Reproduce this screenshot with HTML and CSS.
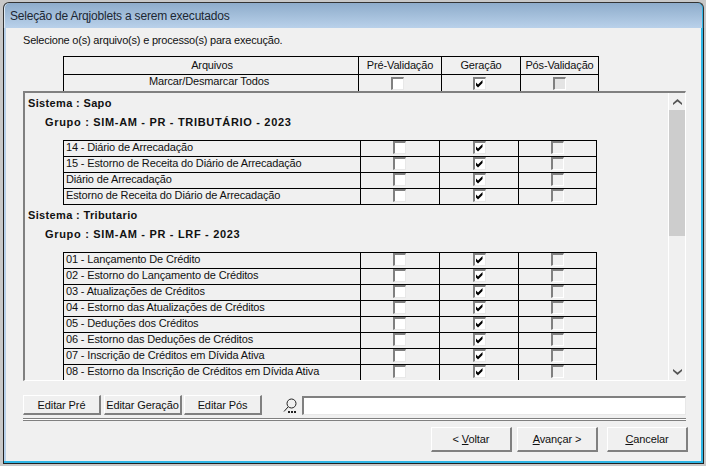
FILE: index.html
```html
<!DOCTYPE html>
<html lang="pt-BR">
<head>
  <meta charset="UTF-8">
  <title>Seleção de Arqjoblets a serem executados</title>
  <link rel="stylesheet" href="styles.css">
</head>
<body>
  <div class="window">
    <div class="titlebar">Seleção de Arqjoblets a serem executados</div>
    <div class="client">
      <p class="hint">Selecione o(s) arquivo(s) e processo(s) para execução.</p>

      <div class="head-table">
        <div class="row head-row">
          <div class="cell name center">Arquivos</div>
          <div class="cell pre">Pré-Validação</div>
          <div class="cell gen">Geração</div>
          <div class="cell pos">Pós-Validação</div>
        </div>
        <div class="row head-row">
          <div class="cell name center">Marcar/Desmarcar Todos</div>
          <div class="cell pre"><span class="check"></span></div>
          <div class="cell gen"><span class="check on"><svg viewBox="0 0 9 9"><path d="M1 3.500l2 2 4.500-4.500v3l-4.500 4.500-2-2z"/></svg></span></div>
          <div class="cell pos"><span class="check off"></span></div>
        </div>
      </div>

      <div class="panel">
        <div class="panel-body" id="panel-body"></div>
        <div class="scrollbar">
          <div class="arrow"><svg viewBox="0 0 9 6"><path d="M0 4l4.500-4 4.500 4v2l-4.500-3.500-4.500 3.500z"/></svg></div>
          <div class="thumb"></div>
          <div class="track"></div>
          <div class="arrow"><svg viewBox="0 0 9 6"><path d="M0 2l4.500 4 4.500-4v-2l-4.500 3.500-4.500-3.500z"/></svg></div>
        </div>
      </div>

      <div class="toolbar">
        <button class="btn edit">Editar Pré</button>
        <button class="btn edit geracao">Editar Geração</button>
        <button class="btn edit">Editar Pós</button>
        <svg class="lens" viewBox="0 0 15 15"><circle cx="8.500" cy="5.500" r="4.500"/><path d="M5 9L1 13.500"/><path class="dots" d="M5 14h2M8 14h2M11 14h2"/></svg>
        <input class="search" type="text">
      </div>
      <div class="divider"></div>

      <div class="footer">
        <button class="btn nav">&lt; <u>V</u>oltar</button>
        <button class="btn nav"><u>A</u>vançar &gt;</button>
        <button class="btn nav cancel"><u>C</u>ancelar</button>
      </div>
    </div>
  </div>

  <script>
    const data = [
      { sistema: 'Sapo', grupo: 'SIM-AM - PR - TRIBUTÁRIO - 2023', arquivos: [
        '14 - Diário de Arrecadação',
        '15 - Estorno de Receita do Diário de Arrecadação',
        'Diário de Arrecadação',
        'Estorno de Receita do Diário de Arrecadação'
      ]},
      { sistema: 'Tributario', grupo: 'SIM-AM - PR - LRF - 2023', arquivos: [
        '01 - Lançamento De Crédito',
        '02 - Estorno do Lançamento de Créditos',
        '03 - Atualizações de Créditos',
        '04 - Estorno das Atualizações de Créditos',
        '05 - Deduções dos Créditos',
        '06 - Estorno das Deduções de Créditos',
        '07 - Inscrição de Créditos em Dívida Ativa',
        '08 - Estorno da Inscrição de Créditos em Dívida Ativa'
      ]}
    ];

    const tick = '<svg viewBox="0 0 9 9"><path d="M1 3.500l2 2 4.500-4.500v3l-4.500 4.500-2-2z"/></svg>';
    let html = '';
    data.forEach(s => {
      html += `<div class="sistema">Sistema : ${s.sistema}</div>`;
      html += `<div class="grupo">Grupo : ${s.grupo}</div>`;
      html += '<div class="file-table">';
      s.arquivos.forEach(a => {
        html += `<div class="row file-row">
          <div class="cell name">${a}</div>
          <div class="cell pre"><span class="check"></span></div>
          <div class="cell gen"><span class="check on">${tick}</span></div>
          <div class="cell pos"><span class="check off"></span></div>
        </div>`;
      });
      html += '</div>';
    });
    document.getElementById('panel-body').innerHTML = html;
  </script>
</body>
</html>
```
FILE: styles.css
```css
* {
  box-sizing: border-box;
}
html, body {
  margin: 0;
  height: 466px;
  overflow: hidden;
}
body {
  width: 706px;
  background: #c4c4c4;
  font-family: "Liberation Sans", sans-serif;
  font-size: 11px;
  letter-spacing: -0.2px;
  color: #111;
}
.window {
  height: 466px;
  padding: 2px 2px 2px 3px;
  display: flex;
  flex-direction: column;
  background: #c8c8c8;
}
.titlebar {
  height: 26px;
  padding: 6px 0 0 6px;
  background: linear-gradient(#8eaccb, #b9d1ea);
  border: 1px solid #333;
  border-bottom: 0;
  border-radius: 6px 6px 0 0;
  box-shadow: inset 1px 0 0 #dce8f3, inset -1px 0 0 #2fb6e6;
  font-size: 12px;
  color: #1c2733;
}
.client {
  flex: 1;
  background: #f0f0f0;
  border-left: 1px solid #222;
  border-right: 1px solid #222;
  border-bottom: 1px solid #222;
  box-shadow: inset 0 -2px 0 #2fb6e6, inset 2px 0 0 #b9d1ea, inset -2px 0 0 #2fb6e6;
  padding: 0 0 0 19px;
}
.hint {
  margin: 6px 0 0;
  height: 22px;
}

/* tabela do topo */
.head-table {
  margin-left: 40px;
  width: 536px;
  border-top: 1px solid #000;
  border-left: 1px solid #000;
  border-right: 1px solid #000;
}
.row {
  display: flex;
}
.head-row {
  height: 17px;
  letter-spacing: -0.15px;
}
.head-row .cell {
  padding-bottom: 2px;
}
.head-row + .head-row {
  border-top: 1px solid #000;
}
.head-row + .head-row .name {
  padding-bottom: 4px;
  padding-right: 6px;
}
.head-row + .head-row .pre,
.head-row + .head-row .gen,
.head-row + .head-row .pos {
  padding-bottom: 0;
  align-items: flex-start;
  padding-top: 2px;
}
.head-row .pre .check { margin-right: 5px; }
.head-row .gen .check { margin-right: 3px; }
.head-row .pos .check { margin-right: 1px; }
.cell {
  display: flex;
  align-items: center;
  justify-content: center;
  border-left: 1px solid #000;
}
.cell.name {
  border-left: 0;
  justify-content: flex-start;
  padding-left: 2px;
  white-space: nowrap;
}
.cell.center {
  justify-content: center;
}
.head-row .name { width: 294px; }
.head-row .pre { width: 83px; }
.head-row .gen { width: 79px; }
.head-row .pos { width: 78px; }

.check {
  width: 13px;
  height: 13px;
  background: #fff;
  border-top: 2px solid #808080;
  border-left: 2px solid #808080;
  border-right: 1px solid #e8e8e8;
  border-bottom: 1px solid #e8e8e8;
  display: block;
  flex: none;
}
.check svg {
  display: block;
  width: 9px;
  height: 9px;
}
.check.off {
  background: #f0f0f0;
  border-right-color: #fff;
  border-bottom-color: #fff;
}
.head-row .check.off {
  background: #e4e4e4;
}

/* painel com rolagem */
.panel {
  width: 663px;
  height: 290px;
  display: flex;
  border-top: 2px solid #808080;
  border-left: 2px solid #808080;
  border-right: 1px solid #fff;
  border-bottom: 1px solid #fff;
  overflow: hidden;
}
.panel-body {
  flex: 1;
  overflow: hidden;
}
.sistema {
  height: 20px;
  line-height: 20px;
  padding-left: 3px;
  font-weight: bold;
  letter-spacing: 0.35px;
}
.grupo {
  height: 27px;
  line-height: 18px;
  padding-left: 20px;
  font-weight: bold;
  letter-spacing: 0.68px;
}
.file-table {
  margin-left: 38px;
  width: 534px;
  border-top: 1px solid #000;
  border-left: 1px solid #000;
  border-right: 1px solid #000;
  letter-spacing: -0.15px;
}
.file-row {
  height: 16px;
  border-bottom: 1px solid #000;
}
.file-row .cell {
  align-items: flex-start;
}
.file-row .name {
  width: 296px;
  align-items: center;
  padding-bottom: 4px;
}
.file-row .pre { width: 79px; }
.file-row .pre .check { margin-right: 2px; }
.file-row .gen { width: 79px; }
.file-row .pos { width: 78px; }

.scrollbar {
  width: 17px;
  display: flex;
  flex-direction: column;
  border-left: 1px solid #fff;
}
.arrow {
  height: 17px;
  display: flex;
  align-items: center;
  justify-content: center;
}
.arrow svg {
  width: 9px;
  height: 6px;
  fill: #555;
}
.thumb {
  height: 126px;
  background: #cdcdcd;
}
.track {
  flex: 1;
}

/* botoes */
.toolbar {
  display: flex;
  align-items: center;
  margin-top: 14px;
  height: 20px;
}
.btn {
  font-family: inherit;
  font-size: 11px;
  letter-spacing: -0.1px;
  color: #111;
  background: #f0f0f0;
  border-top: 1px solid #fff;
  border-left: 1px solid #fff;
  border-right: 2px solid #808080;
  border-bottom: 2px solid #808080;
  padding: 0;
  white-space: nowrap;
}
.btn.edit {
  width: 78px;
  height: 20px;
  margin-right: 3px;
}
.btn.geracao {
  margin-right: 2px;
}
.lens {
  width: 15px;
  height: 15px;
  margin-left: 18px;
  margin-right: 4px;
  fill: none;
  stroke: #222;
  stroke-width: 1;
}
.lens .dots {
  stroke-width: 2;
}
.search {
  width: 384px;
  height: 19px;
  background: #fff;
  border-top: 2px solid #808080;
  border-left: 2px solid #808080;
  border-right: 1px solid #e8e8e8;
  border-bottom: 1px solid #e8e8e8;
  padding: 0;
  outline: 0;
}
.divider {
  width: 663px;
  height: 3px;
  margin-top: 3px;
  border-top: 1px solid #808080;
  border-bottom: 1px solid #808080;
  background: #fff;
}
.footer {
  display: flex;
  justify-content: flex-end;
  margin-top: 6px;
  padding-right: 15px;
}
.btn.nav {
  width: 81px;
  height: 25px;
  margin-left: 5px;
}
.btn.cancel {
  margin-left: 9px;
}
```
